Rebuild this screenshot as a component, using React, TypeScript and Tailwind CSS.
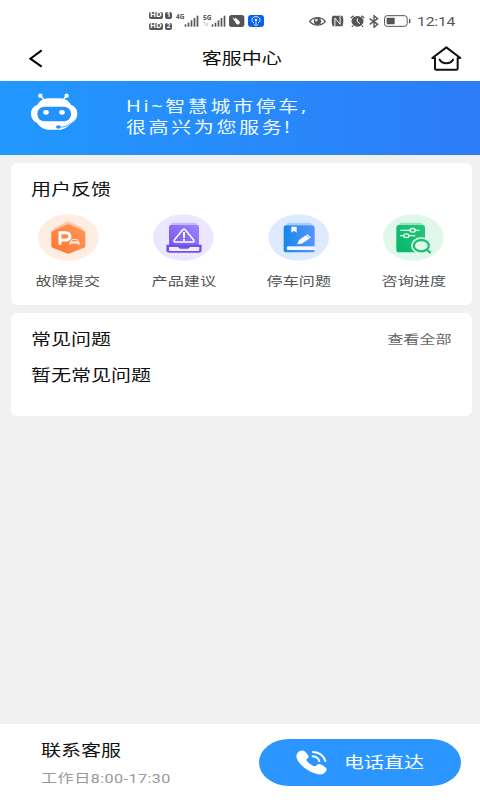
import type { ReactNode } from "react";

// wide text, the glyphs are stretched horizontally
function Wide({ className = "", children }: { className?: string; children: ReactNode }) {
  return (
    <span className={`inline-block scale-x-[1.3] whitespace-nowrap ${className}`}>{children}</span>
  );
}

function SignalBars() {
  return (
    <svg width="16" height="12" viewBox="0 0 48 36" fill="#555">
      <rect x="2" y="28" width="5" height="7" />
      <rect x="11" y="23" width="5" height="12" />
      <rect x="20" y="16" width="5" height="19" />
      <rect x="29" y="9" width="5" height="26" />
      <rect x="38" y="2" width="5" height="33" />
    </svg>
  );
}

function HdBadge({ n }: { n: string }) {
  return (
    <div className="flex gap-[2px]">
      <span className="flex h-[7px] w-[14px] items-center justify-center rounded-[2px] bg-[#555] text-[6.5px] leading-none font-bold text-white">
        <span className="scale-x-[1.2]">HD</span>
      </span>
      <span className="flex h-[7px] w-[7px] items-center justify-center rounded-[2px] bg-[#555] text-[6.5px] leading-none font-bold text-white">
        {n}
      </span>
    </div>
  );
}

function StatusBar() {
  return (
    <div className="flex h-[42px] items-center pl-[149px] text-[#555]">
      <div className="flex flex-col gap-[4px]">
        <HdBadge n="1" />
        <HdBadge n="2" />
      </div>
      <div className="ml-[4px] flex w-[25px]">
        <span className="-mt-[1px] w-[8px] text-[6.5px] leading-none font-bold">4G</span>
        <SignalBars />
      </div>
      <div className="ml-[2px] flex w-[26px]">
        <div className="-mt-[1px] flex w-[8px] flex-col gap-[1px]">
          <span className="text-[6.5px] leading-[7px] font-bold">5G</span>
          <span className="text-[5px] leading-[5px] text-[#aaa]">1s</span>
        </div>
        <SignalBars />
      </div>
      <svg className="-mr-px" width="16" height="12" viewBox="0 0 48 36">
        <rect width="46" height="36" rx="8" fill="#555" />
        <path d="M11 6c2 9 5 11 7 13 1 6 6 10 10 10l5-6c-1-4-5-8-9-10l-4-5-3 4z" fill="#fff" />
      </svg>
      <svg className="ml-[4px]" width="16" height="12" viewBox="0 0 48 36">
        <rect width="48" height="36" rx="9" fill="#0862ef" />
        <g fill="none" stroke="#dceaff" strokeWidth="3">
          <path d="M18 24C7 18 11 5 24 5s17 13 6 19" />
          <path d="M24 20v8M18 28c3 4 9 4 12 0" />
        </g>
        <circle cx="24" cy="15" r="4" fill="#dceaff" />
      </svg>
      <svg className="ml-[45px]" width="17" height="11" viewBox="0 0 52 33">
        <path d="M2 16C14 1 38 1 50 16 38 31 14 31 2 16z" fill="#fff" stroke="#555" strokeWidth="4" />
        <circle cx="26" cy="16" r="11" fill="#555" />
        <path d="M26 8a7 7 0 0 0-7 8h7z" fill="#fff" />
      </svg>
      <svg className="ml-[5px]" width="13" height="12" viewBox="0 0 40 36" fill="none">
        <path d="M5 2h30c4 8 4 24 0 32H5C1 26 1 10 5 2z" fill="#555" />
        <path d="M12 34V9l16 19V2" stroke="#fff" strokeWidth="3" />
      </svg>
      <svg className="ml-[6px]" width="15" height="12" viewBox="0 0 45 36">
        <path d="M2 9l9-7M43 9l-9-7M9 32l-3 4M36 32l3 4" stroke="#555" strokeWidth="4" />
        <ellipse cx="22.500" cy="19" rx="18" ry="16" fill="#555" />
        <path d="M22 10v10l8 6" fill="none" stroke="#fff" strokeWidth="3" />
      </svg>
      <svg className="ml-[4px]" width="10" height="13" viewBox="0 0 30 39">
        <path d="M2 11l24 17-11 9V2l11 9L2 28" fill="none" stroke="#555" strokeWidth="4" />
      </svg>
      <svg className="ml-[5px]" width="27" height="12" viewBox="0 0 81 36">
        <rect x="1.500" y="2" width="68" height="32" rx="8" fill="none" stroke="#555" strokeWidth="3" />
        <rect x="8" y="8" width="24" height="20" rx="2" fill="#555" />
        <rect x="75" y="11" width="4" height="14" rx="2" fill="#555" />
      </svg>
      <Wide className="mt-[2px] ml-[6px] origin-left font-['Roboto',sans-serif] text-[12px] leading-none tracking-[-0.1px]">
        12:14
      </Wide>
    </div>
  );
}

function Robot() {
  return (
    <svg width="47" height="38" viewBox="95 172 141 114">
      <g fill="#fff">
        <circle cx="123" cy="180" r="6.500" />
        <circle cx="202" cy="180" r="6.500" />
        <path d="M124 180l10 13M201 180l-10 13" stroke="#fff" strokeWidth="4" />
        <path d="M114 208c7-14 20-20 36-20h29c16 0 29 6 36 20 11 2 19 13 19 26s-8 24-18 27c-10 14-25 21-37 21h-29c-14 0-29-7-37-21-10-3-18-14-18-27s8-24 19-26z" />
      </g>
      <rect x="114" y="213" width="101" height="44" rx="21" fill="#2591fe" />
      <ellipse cx="140" cy="230" rx="8.500" ry="7" fill="#fff" />
      <ellipse cx="188" cy="230" rx="8.500" ry="7" fill="#fff" />
      <ellipse cx="177" cy="274" rx="7" ry="5.500" fill="#2591fe" />
      <path d="M181 274c14 1 24-3 31-11" fill="none" stroke="#2591fe" strokeWidth="2.500" />
    </svg>
  );
}

function FaultIcon() {
  return (
    <svg width="61" height="47" viewBox="0 0 183 141">
      <defs>
        <linearGradient id="orange" x1="0" y1="1" x2="1" y2="0">
          <stop offset="0" stopColor="#ff7431" />
          <stop offset="1" stopColor="#ff9a57" />
        </linearGradient>
      </defs>
      <ellipse cx="91" cy="70.500" rx="91" ry="70" fill="#ffece2" />
      <path d="M85 24q6-3 12 0l38 19-5 30H52l-5-30z" fill="#ffc6a5" />
      <path d="M84 33q7-4 14 0l40 18q4 2 4 6v38q0 4-4 6l-40 16q-7 3-14 0l-40-16q-4-2-4-6V57q0-4 4-6z" fill="url(#orange)" />
      <path d="M66 92V56h17c17 0 17 22 0 22H66" fill="none" stroke="#fff" strokeWidth="9" />
      <path d="M97 82l4-7h17l4 7 3 3v7h-5v-3H99v3h-5v-7z" fill="#ffe3d3" />
      <path d="M100 82l3-4h13l3 4z" fill="#ff8b4c" />
    </svg>
  );
}

function AdviceIcon() {
  return (
    <svg width="61" height="47" viewBox="0 0 183 141">
      <defs>
        <linearGradient id="purple" x1="0" y1="1" x2="1" y2="0">
          <stop offset="0" stopColor="#7857ed" />
          <stop offset="1" stopColor="#9b84ff" />
        </linearGradient>
      </defs>
      <ellipse cx="91" cy="70.500" rx="91" ry="70" fill="#ebe7fe" />
      <path d="M59 26h68q4 0 4 4v8H55v-8q0-4 4-4z" fill="#c8bbfc" />
      <path d="M53 33h80q5 0 5 5v58H48V38q0-5 5-5z" fill="url(#purple)" />
      <path d="M40 92h106v16q0 8-9 8H49q-9 0-9-8z" fill="#7252e5" />
      <path d="M48 99h27l5 5h26l5-5h28v9q0 3-4 3H52q-4 0-4-3z" fill="#f1edff" />
      <path d="M88 49q5-6 10 0l24 29q3 6-4 6H68q-7 0-4-6z" fill="none" stroke="#fff" strokeWidth="4.500" />
      <path d="M93 54v18M93 75v5" stroke="#fff" strokeWidth="6" />
    </svg>
  );
}

function ParkingIcon() {
  return (
    <svg width="61" height="47" viewBox="0 0 183 141">
      <defs>
        <linearGradient id="blue" x1="0" y1="0" x2="1" y2="0">
          <stop offset="0" stopColor="#1687e9" />
          <stop offset="1" stopColor="#5595ff" />
        </linearGradient>
      </defs>
      <ellipse cx="92" cy="70.500" rx="91" ry="70" fill="#deebff" />
      <path d="M61 26h65q4 0 6 8H55q2-8 6-8z" fill="#a8ccfb" />
      <path d="M55 34h76q9 0 9 8v55H60q-4 0-4 5t4 6h80v3q0 4-5 4H55q-8 0-8-8V42q0-8 8-8z" fill="url(#blue)" />
      <path d="M57 100h82v8H60q-3 0-3-3z" fill="#f5f9ff" />
      <path d="M70 38h16v18l-8-6-8 6z" fill="#fff" />
      <path d="M89 90l5-12 24-16 10 8-25 17z" fill="#fff" stroke="#fff" strokeWidth="2" strokeLinejoin="round" />
      <path d="M112 63l12 9" stroke="#3c8ff5" strokeWidth="2" />
    </svg>
  );
}

function ProgressIcon() {
  return (
    <svg width="61" height="47" viewBox="0 0 183 141">
      <defs>
        <linearGradient id="green" x1="0" y1="1" x2="1" y2="0">
          <stop offset="0" stopColor="#06b568" />
          <stop offset="1" stopColor="#23c87b" />
        </linearGradient>
      </defs>
      <ellipse cx="91" cy="70.500" rx="91" ry="70" fill="#e0f8eb" />
      <path d="M52 26h61q4 0 5 8H47q1-8 5-8z" fill="#9ae5c1" />
      <rect x="40" y="33" width="86" height="82" rx="8" fill="url(#green)" />
      <g fill="none" stroke="#e8fff4" strokeWidth="4" strokeLinecap="round">
        <path d="M53 49h28M97 49h11M53 65h8M80 65h15" />
        <ellipse cx="89" cy="49" rx="8" ry="5.500" />
        <ellipse cx="70" cy="65" rx="8" ry="5.500" />
      </g>
      <ellipse cx="115" cy="95" rx="31" ry="25" fill="#e0f8eb" />
      <ellipse cx="115" cy="95" rx="22.500" ry="17" fill="none" stroke="#21bf76" strokeWidth="7" />
      <path d="M131 107l10 8" stroke="#21bf76" strokeWidth="7" strokeLinecap="round" />
    </svg>
  );
}

const feedback = [
  { label: "故障提交", icon: <FaultIcon /> },
  { label: "产品建议", icon: <AdviceIcon /> },
  { label: "停车问题", icon: <ParkingIcon /> },
  { label: "咨询进度", icon: <ProgressIcon /> },
];

export default function App() {
  return (
    <div className="flex h-[800px] w-[480px] flex-col overflow-hidden bg-[#f1f1f1] font-['Noto_Sans','Noto_Sans_CJK_SC',sans-serif] text-[#111]">
      <header className="h-[81px] bg-white">
        <StatusBar />
        <div className="flex h-[32px] items-center justify-between pr-[18px] pl-[29px]">
          <svg width="14" height="19" viewBox="0 0 42 57" fill="none" stroke="#000" strokeWidth="6">
            <path d="M38 4L4 29l34 24" />
          </svg>
          <Wide className="mt-[2px] ml-[9px] text-[15.4px] leading-none">客服中心</Wide>
          <svg width="31" height="25" viewBox="0 0 93 75" fill="none" stroke="#111" strokeWidth="6" strokeLinecap="round" strokeLinejoin="round">
            <path d="M12 36H4L46 4l42 32h-8v32q0 3-4 3H16q-4 0-4-3z" />
            <path d="M26 41c8 14 32 14 40 0" />
          </svg>
        </div>
      </header>

      <section className="flex h-[74px] shrink-0 bg-linear-to-r from-[#2198ff] to-[#2c7cf7] pt-[12px] pl-[31px] text-[#effaff]">
        <Robot />
        <div className="mt-[3px] ml-[47.5px] flex flex-col text-[15.4px] leading-[21px] tracking-[2px]">
          <Wide className="origin-left">Hi~智慧城市停车,</Wide>
          <Wide className="origin-left">很高兴为您服务!</Wide>
        </div>
      </section>

      <main className="flex flex-1 flex-col gap-[7.5px] pt-[8px] pr-[8.5px] pl-[10.5px]">
        <section className="h-[142px] rounded-[6px] bg-white pt-[17px]">
          <h2 className="pl-[20.5px] text-[15.4px] leading-[20px]">
            <Wide className="origin-left">用户反馈</Wide>
          </h2>
          <div className="mt-[14px] grid grid-cols-4">
            {feedback.map((item) => (
              <div key={item.label} className="flex flex-col items-center">
                {item.icon}
                <Wide className="mt-[12px] text-[12.4px] leading-[18px] text-[#555]">{item.label}</Wide>
              </div>
            ))}
          </div>
        </section>

        <section className="h-[103.5px] rounded-[6px] bg-white pt-[17px] pr-[20px] pl-[20.5px]">
          <div className="flex items-center justify-between leading-[20px]">
            <Wide className="origin-left text-[15.4px]">常见问题</Wide>
            <Wide className="origin-right text-[12.4px] text-[#666]">查看全部</Wide>
          </div>
          <Wide className="mt-[16px] origin-left text-[15.4px] leading-[20px]">暂无常见问题</Wide>
        </section>
      </main>

      <footer className="flex h-[76.5px] items-start justify-between bg-white pr-[19px] pl-[41px]">
        <div className="flex flex-col pt-[17px]">
          <Wide className="origin-left text-[15.4px] leading-[20px]">联系客服</Wide>
          <Wide className="mt-[9px] origin-left font-['Roboto','Noto_Sans_CJK_SC',sans-serif] text-[12.4px] leading-[18px] tracking-[0.35px] text-[#999]">
            工作日8:00-17:30
          </Wide>
        </div>
        <button className="mt-[15px] flex h-[47px] w-[202px] items-center rounded-[30px/23.5px] bg-[#2b96ff] pl-[37px] text-white">
          <svg width="32" height="25" viewBox="0 0 96 75">
            <path d="M5 8C10 3 17 0 22 2c5 1 16 13 16 18 0 4-8 7-7 10 4 8 13 14 24 19 4 1 9-7 14-7 6 0 22 10 23 15 1 6-7 14-14 16C48 77-6 37 2 14z" fill="#fff" />
            <path d="M50 19c10 1 18 7 20 15M51 6c19 1 32 12 37 27" fill="none" stroke="#fff" strokeWidth="6" strokeLinecap="round" />
          </svg>
          <Wide className="mt-[2px] ml-[16px] origin-left text-[15.4px] leading-none">电话直达</Wide>
        </button>
      </footer>
    </div>
  );
}
